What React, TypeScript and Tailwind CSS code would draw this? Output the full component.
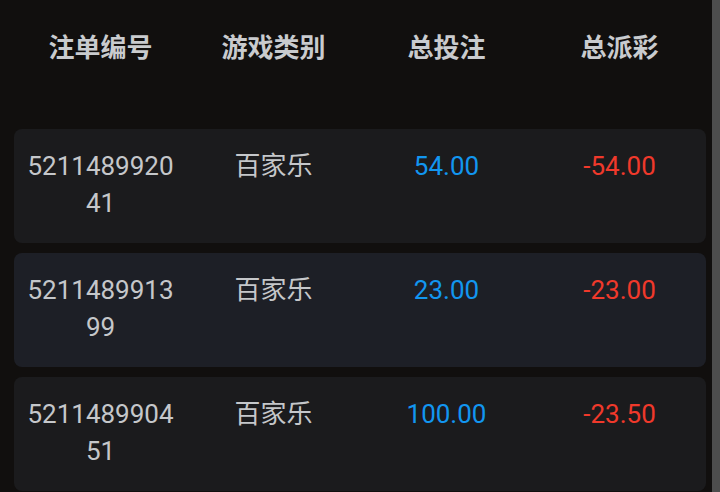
import React from "react";

const rows = [
  { id: "521148992041", game: "百家乐", bet: "54.00", pay: "-54.00", bg: "bg-[#1b1b1d]" },
  { id: "521148991399", game: "百家乐", bet: "23.00", pay: "-23.00", bg: "bg-[#1d1f26]" },
  { id: "521148990451", game: "百家乐", bet: "100.00", pay: "-23.50", bg: "bg-[#1b1b1d]" },
];

const font = { fontFamily: 'Roboto, "Noto Sans CJK SC", sans-serif' };

export default function App() {
  return (
    <div className="flex h-[492px] w-[720px] overflow-hidden bg-[#110f0e]" style={font}>
      <div className="flex-1 pl-[14px] pr-[6px]">
        <div className="grid h-[97px] grid-cols-4 items-center text-center text-[26px] font-bold text-[#c9cbce]">
          <div>注单编号</div>
          <div>游戏类别</div>
          <div>总投注</div>
          <div>总派彩</div>
        </div>
        <div className="mt-[32px] flex flex-col gap-[10px]">
          {rows.map((r) => (
            <div
              key={r.id}
              className={`grid h-[114px] shrink-0 grid-cols-4 rounded-[8px] pt-[19px] text-center text-[26px] leading-[37px] ${r.bg}`}
            >
              <div className="break-all px-[12px] text-[#c5c7ca]">{r.id}</div>
              <div className="px-[10px] text-[#c5c7ca]">{r.game}</div>
              <div className="px-[10px] text-[#1296f0]">{r.bet}</div>
              <div className="px-[10px] text-[#f0392b]">{r.pay}</div>
            </div>
          ))}
        </div>
      </div>
      <div className="w-[8px] bg-[#4d4d4d]" />
    </div>
  );
}
